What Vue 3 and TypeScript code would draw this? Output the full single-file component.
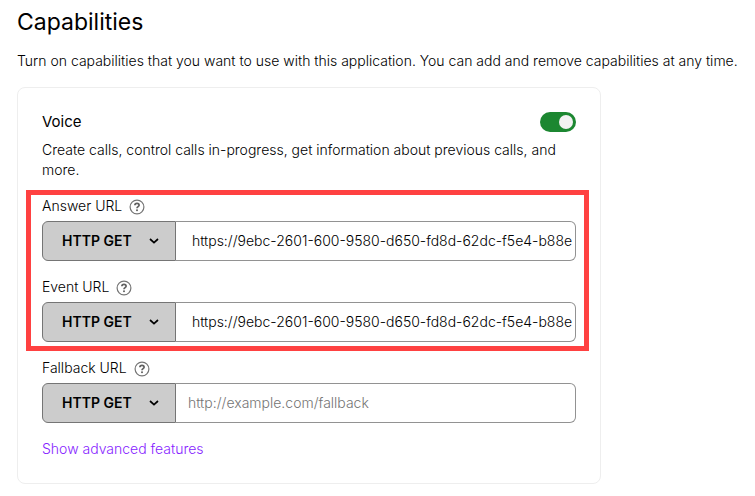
<script setup lang="ts">
import { ref } from 'vue'

interface UrlField {
  id: string
  label: string
  method: string
  value: string
  placeholder: string
}

const voiceEnabled = ref(true)

const requiredFields = ref<UrlField[]>([
  {
    id: 'answer-url',
    label: 'Answer URL',
    method: 'GET',
    value: ' https://9ebc-2601-600-9580-d650-fd8d-62dc-f5e4-b88e',
    placeholder: '',
  },
  {
    id: 'event-url',
    label: 'Event URL',
    method: 'GET',
    value: ' https://9ebc-2601-600-9580-d650-fd8d-62dc-f5e4-b88e',
    placeholder: '',
  },
])

const optionalFields = ref<UrlField[]>([
  {
    id: 'fallback-url',
    label: 'Fallback URL',
    method: 'GET',
    value: '',
    placeholder: 'http://example.com/fallback',
  },
])

const groups = [
  { name: 'required', highlighted: true, fields: requiredFields.value },
  { name: 'optional', highlighted: false, fields: optionalFields.value },
]
</script>

<template>
  <main class="page">
    <h1 class="title">Capabilities</h1>
    <p class="intro">
      Turn on capabilities that you want to use with this application. You can add and remove capabilities at any time.
    </p>

    <section class="card">
      <header class="card-head">
        <label class="card-title" for="voice">Voice</label>
        <input id="voice" v-model="voiceEnabled" class="switch" type="checkbox" role="switch" />
      </header>
      <p class="card-text">
        Create calls, control calls in-progress, get information about previous calls, and more.
      </p>

      <div
        v-for="group in groups"
        :key="group.name"
        class="group"
        :class="{ highlighted: group.highlighted }"
      >
        <div v-for="field in group.fields" :key="field.id" class="field">
          <div class="field-head">
            <label :for="field.id">{{ field.label }}</label>
            <svg class="help" viewBox="0 0 16 16" aria-hidden="true">
              <circle cx="8" cy="8" r="6.9" />
              <path class="mark" d="M5.9 6.3C5.9 5.1 6.8 4.4 8 4.4s2.1.7 2.1 1.8C10.1 7.6 8 7.6 8 9.2" />
              <circle class="dot" cx="8" cy="11.2" r="1" />
            </svg>
          </div>
          <div class="control">
            <div class="method">
              <select v-model="field.method" :aria-label="field.label + ' method'">
                <option value="GET">HTTP GET</option>
                <option value="POST">HTTP POST</option>
              </select>
              <svg class="chevron" viewBox="0 0 10 6" aria-hidden="true">
                <path d="M1 1l4 3.6L9 1" />
              </svg>
            </div>
            <input
              :id="field.id"
              v-model="field.value"
              class="url"
              type="text"
              :placeholder="field.placeholder"
              spellcheck="false"
            />
          </div>
        </div>
      </div>

      <a class="more" href="#advanced">Show advanced features</a>
    </section>
  </main>
</template>

<style>
body {
  background: #fff;
}
</style>

<style scoped>
.page {
  padding: 8px 8px 12px 17px;
  color: #000;
  font-family: Inter, "Liberation Sans", sans-serif;
  font-size: 14px;
  font-weight: 300;
  line-height: 20px;
}

.title {
  margin: 0 0 15px;
  font-size: 23px;
  font-weight: 400;
  line-height: 28px;
}

.intro {
  margin: 0 0 16px;
}

.card {
  box-sizing: border-box;
  max-width: 584px;
  padding: 24px;
  border: 1px solid #eee;
  border-radius: 8px;
}

.card-head {
  display: flex;
  align-items: center;
  justify-content: space-between;
}

.card-title {
  font-size: 15px;
  font-weight: 400;
}

.switch {
  display: flex;
  align-items: center;
  justify-content: flex-end;
  box-sizing: border-box;
  width: 36px;
  height: 20px;
  margin: 0;
  padding: 3px;
  border-radius: 10px;
  background: #8f8f8f;
  appearance: none;
  cursor: pointer;
}

.switch::before {
  width: 14px;
  height: 14px;
  margin-right: auto;
  border-radius: 50%;
  background: #f2f2f2;
  content: "";
}

.switch:checked {
  background: #1c8731;
}

.switch:checked::before {
  margin-right: 0;
}

.card-text {
  margin: 8px 0 16px;
}

.group {
  display: grid;
  gap: 16px;
  margin-bottom: 16px;
}

.highlighted {
  position: relative;
}

.highlighted::after {
  position: absolute;
  inset: -6px -13px -9px -16px;
  border: 5px solid #ff4141;
  content: "";
  pointer-events: none;
}

.field {
  display: grid;
  gap: 5px;
}

.field-head {
  display: flex;
  align-items: center;
  gap: 7px;
}

.help {
  width: 16px;
  height: 16px;
  margin-top: 2px;
  fill: none;
  stroke: #757575;
  stroke-width: 1.2;
}

.help .mark {
  stroke: #616161;
  stroke-width: 1.7;
}

.help .dot {
  fill: #616161;
  stroke: none;
}

.control {
  display: flex;
  height: 40px;
}

.method {
  display: grid;
  flex: none;
  align-items: center;
  width: 134px;
}

.method select {
  grid-area: 1 / 1;
  box-sizing: border-box;
  width: 100%;
  height: 100%;
  margin: 0;
  padding: 0 32px 0 19px;
  border: 1px solid #757575;
  border-radius: 6px 0 0 6px;
  background: #ccc;
  color: #000;
  font: inherit;
  font-weight: 600;
  appearance: none;
}

.chevron {
  grid-area: 1 / 1;
  justify-self: end;
  width: 10px;
  height: 6px;
  margin-right: 17px;
  fill: none;
  stroke: #000;
  stroke-width: 1.7;
  pointer-events: none;
}

.url {
  box-sizing: border-box;
  flex: 1;
  min-width: 0;
  margin: 0;
  padding: 0 2px 0 12px;
  border: 1px solid #929292;
  border-left: 0;
  border-radius: 0 6px 6px 0;
  background: #fff;
  color: #000;
  font: inherit;
}

.url::placeholder {
  color: #757575;
  opacity: 1;
}

.more {
  display: block;
  width: fit-content;
  color: #871eff;
  text-decoration: none;
}
</style>
